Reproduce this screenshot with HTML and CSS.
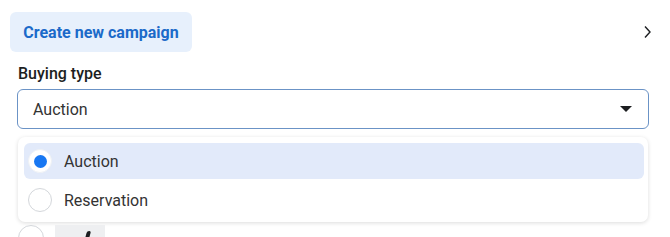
FILE: index.html
```html
<!DOCTYPE html>
<html lang="en">
	<head>
		<meta charset="utf-8">
		<link rel="stylesheet" href="styles.css">
	</head>
	<body>
		<div class="panel">
			<div class="header">
				<a href="#" class="create-btn">Create new campaign</a>
				<svg class="chevron" width="10" height="14" viewBox="0 0 10 14">
					<path d="M2 1.5 L7 7 L2 12.5" fill="none" stroke="#1c1e21" stroke-width="1.4"/>
				</svg>
			</div>
			<div class="field">
				<label class="label">Buying type</label>
				<div class="select">
					<span>Auction</span>
					<span class="caret"></span>
				</div>
				<ul class="options">
					<li class="option active"><span class="radio checked"></span>Auction</li>
					<li class="option"><span class="radio"></span>Reservation</li>
				</ul>
				<div class="next-row">
					<span class="radio"></span>
					<span class="chip"><span class="chip-mark"></span></span>
				</div>
			</div>
		</div>
	</body>
</html>
```

FILE: styles.css
```css
*, *::before, *::after {
	margin: 0;
	padding: 0;
	box-sizing: border-box;
}
body {
	background-color: #fff;
	font-family: Roboto, "Liberation Sans", sans-serif;
	color: #1c1e21;
	overflow: hidden;
}
.panel {
	width: 670px;
	height: 237px;
	overflow: hidden;
}
.header {
	display: flex;
	align-items: center;
	justify-content: space-between;
	padding: 12px 17px 0 10px;
}
.create-btn {
	display: flex;
	align-items: center;
	justify-content: center;
	width: 182px;
	height: 40px;
	border-radius: 6px;
	background-color: #e7f0fc;
	color: #1b6ac9;
	font-size: 16px;
	font-weight: 700;
	text-decoration: none;
}
.field {
	padding: 0 21px 0 17px;
}
.label {
	display: block;
	margin-top: 12px;
	padding-left: 1px;
	font-size: 16px;
	line-height: 20px;
	font-weight: 500;
}
.select {
	display: flex;
	align-items: center;
	justify-content: space-between;
	height: 40px;
	margin-top: 5px;
	padding: 0 16px 0 15px;
	border: 1px solid #6b93c6;
	border-radius: 6px;
	font-size: 16px;
	color: #333;
}
.caret {
	width: 0;
	height: 0;
	border-left: 6px solid transparent;
	border-right: 6px solid transparent;
	border-top: 6px solid #1c1e21;
}
.options {
	list-style: none;
	margin: 8px 1px 0;
	padding: 6px 4px 4px 6px;
	border-radius: 7px;
	background-color: #fff;
	box-shadow: 0 1px 4px rgba(0, 0, 0, .14);
	display: flex;
	flex-direction: column;
	gap: 3px;
}
.option {
	display: flex;
	align-items: center;
	gap: 12px;
	height: 36px;
	padding-left: 4px;
	border-radius: 6px;
	font-size: 16px;
	color: #333;
}
.option.active {
	background-color: #e2eafa;
}
.radio {
	position: relative;
	width: 24px;
	height: 24px;
	border-radius: 50%;
	border: 1px solid #d4d7db;
	background-color: #fff;
	flex: 0 0 24px;
}
.radio.checked {
	border-color: #eef1f5;
}
.radio.checked::after {
	content: "";
	position: absolute;
	left: 4.5px;
	top: 4.5px;
	width: 13px;
	height: 13px;
	border-radius: 50%;
	background-color: #1877f2;
}
.next-row {
	display: flex;
	align-items: flex-start;
	gap: 11px;
	margin-top: 3px;
	padding-left: 1px;
}
.next-row .radio {
	width: 26px;
	height: 26px;
	flex-basis: 26px;
}
.chip {
	display: block;
	width: 50px;
	height: 24px;
	background-color: #eeeff1;
	position: relative;
}
.chip-mark {
	position: absolute;
	left: 31px;
	top: 6px;
	width: 4px;
	height: 8px;
	background-color: #1c1e21;
	border-radius: 3px 3px 0 0;
	transform: skewX(-15deg);
}
```
